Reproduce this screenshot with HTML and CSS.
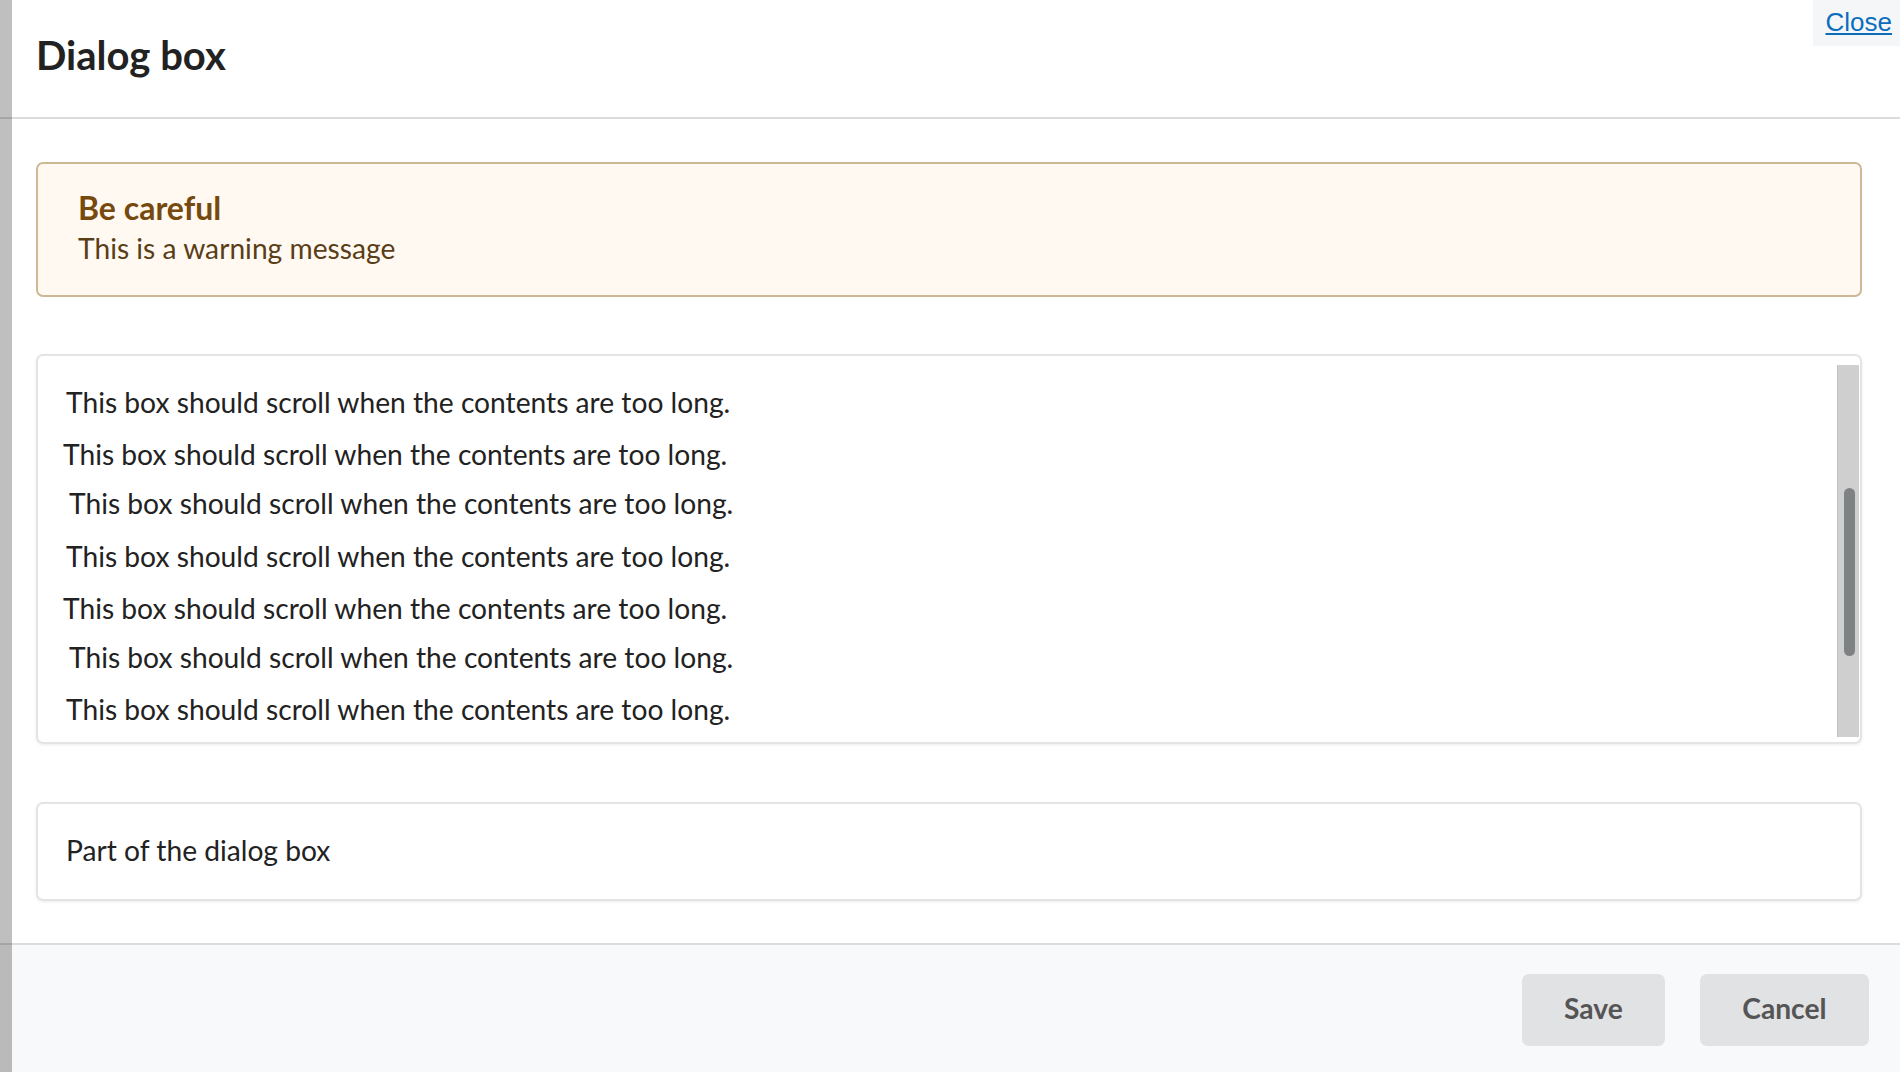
FILE: index.html
```html
<!DOCTYPE html>
<html lang="en">
<head>
<meta charset="utf-8">
<title>Dialog box</title>
<link rel="stylesheet" href="styles.css">
</head>
<body>
<div class="dialog">
  <header class="dialog-header">
    <h1 class="dialog-title">Dialog box</h1>
    <a class="close-link" href="#">Close</a>
  </header>
  <main class="dialog-body">
    <section class="notice">
      <div class="notice-title">Be careful</div>
      <div class="notice-text">This is a warning message</div>
    </section>
    <section class="scroll-box">
      <div class="scroll-content">
        <p class="line v1 first">This box should scroll when the contents are too long.</p>
        <p class="line v2">This box should scroll when the contents are too long.</p>
        <p class="line v3">This box should scroll when the contents are too long.</p>
        <p class="line v1">This box should scroll when the contents are too long.</p>
        <p class="line v2">This box should scroll when the contents are too long.</p>
        <p class="line v3">This box should scroll when the contents are too long.</p>
        <p class="line v1">This box should scroll when the contents are too long.</p>
      </div>
      <div class="scroll-track"><div class="scroll-thumb"></div></div>
    </section>
    <section class="part-box">Part of the dialog box</section>
  </main>
  <footer class="dialog-footer">
    <button class="btn" type="button">Save</button>
    <button class="btn btn-cancel" type="button">Cancel</button>
  </footer>
</div>
<div class="side-shade"></div>
</body>
</html>
```

FILE: styles.css
```css
* { box-sizing: border-box; }

html, body {
  margin: 0;
  padding: 0;
  background: #ffffff;
}

body {
  font-family: "Lato", "Noto Sans", sans-serif;
  color: #222222;
}

.dialog {
  min-height: 100vh;
  display: flex;
  flex-direction: column;
}

.dialog-header {
  position: relative;
  height: 119px;
  padding: 31px 0 0 36px;
  border-bottom: 2px solid #dcdcdc;
}

.dialog-title {
  margin: 0;
  font-size: 40px;
  font-weight: 700;
  line-height: 48px;
  color: #222222;
}

.close-link {
  position: absolute;
  top: 0;
  right: 0;
  height: 46px;
  padding: 0 8px 2px 13px;
  background: #f4f6f8;
  font-family: "Liberation Sans", Arial, sans-serif;
  font-size: 26px;
  line-height: 44px;
  color: #0b6ebd;
  text-decoration: underline;
}

.dialog-body {
  flex: 1;
  display: flex;
  flex-direction: column;
  gap: 58px;
  padding: 43px 38px 42px 36px;
}

.notice {
  height: 135px;
  padding: 25px 40px 0 40px;
  background: #fff9f2;
  border: 2px solid #cdb995;
  border-radius: 7px;
}

.notice-title {
  font-size: 32px;
  font-weight: 700;
  line-height: 38px;
  color: #764a0e;
}

.notice-text {
  margin-top: 4px;
  font-size: 28.2px;
  line-height: 34px;
  color: #5a3e17;
}

.scroll-box {
  display: flex;
  height: 390px;
  margin-top: -1px;
  border: 2px solid #e4e4e4;
  border-radius: 7px;
  box-shadow: 0 1px 3px rgba(0, 0, 0, 0.08);
  overflow: hidden;
}

.scroll-content {
  flex: 1;
  padding: 29px 0 0 28px;
}

.line {
  margin: 0;
  font-size: 28.2px;
  line-height: 34px;
  color: #222222;
}

.line.v1 { margin-top: 18.5px; }
.line.v2 { margin-top: 18px; margin-left: -3px; }
.line.v3 { margin-top: 15px; margin-left: 3px; }
.line.first { margin-top: 0; }

.scroll-track {
  width: 22px;
  margin: 9px 1px 5px 0;
  padding: 123px 4px 0 6px;
  background: #cfcfcf;
  border-left: 1px solid #c4c0bd;
}

.scroll-thumb {
  height: 168px;
  border-radius: 6px;
  background: #7f8283;
}

.part-box {
  height: 99px;
  padding: 29px 29px 0 28px;
  border: 2px solid #e4e4e4;
  border-radius: 7px;
  box-shadow: 0 1px 3px rgba(0, 0, 0, 0.08);
  font-size: 28.2px;
  line-height: 34px;
  color: #222222;
}

.dialog-footer {
  display: flex;
  justify-content: flex-end;
  gap: 35px;
  height: 129px;
  padding: 29px 31px 0 0;
  background: #f8f9fa;
  border-top: 2px solid #dcdcdc;
}

.btn {
  height: 72px;
  padding: 0 42px 4px;
  border: none;
  border-radius: 7px;
  background: #e1e2e4;
  font-family: "Lato", "Noto Sans", sans-serif;
  font-size: 28.2px;
  font-weight: 700;
  color: #555555;
  cursor: pointer;
}

.btn-cancel {
  padding: 0 42.5px 4px;
}

.side-shade {
  position: fixed;
  top: 0;
  left: 0;
  width: 12px;
  height: 100%;
  background: rgba(0, 0, 0, 0.25);
  pointer-events: none;
}
```
